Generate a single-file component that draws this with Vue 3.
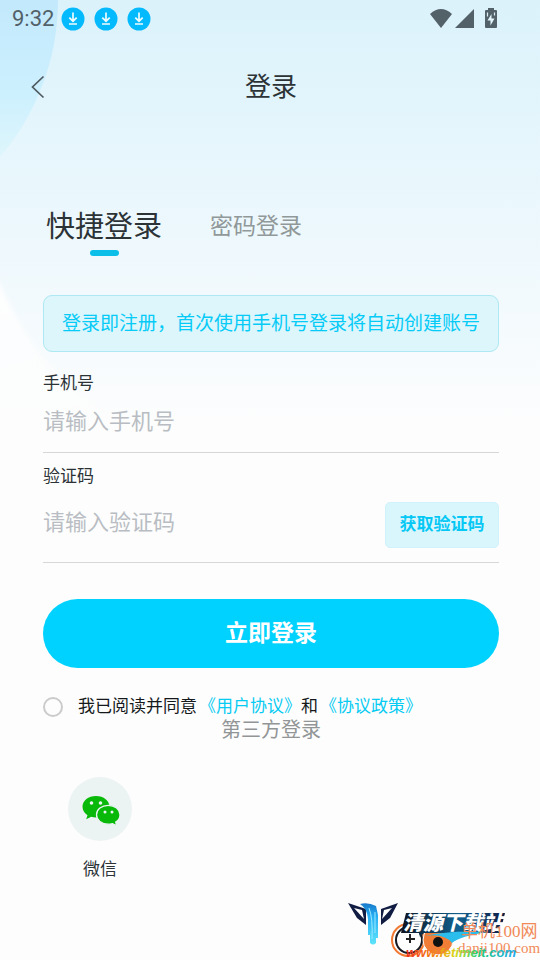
<script setup>
import { ref } from 'vue'

const phone = ref('')
const code = ref('')
const agreed = ref(false)
const mode = ref('quick')
const downloads = [1, 2, 3]
</script>

<template>
  <div class="page">
    <svg class="backdrop" viewBox="0 0 540 460" preserveAspectRatio="none" aria-hidden="true">
      <defs>
        <linearGradient id="disc" x1="0" y1="0" x2="0" y2="160" gradientUnits="userSpaceOnUse">
          <stop offset="0" stop-color="#c2e9fc" />
          <stop offset="0.6" stop-color="#cdf0fe" />
          <stop offset="1" stop-color="#dff6fc" />
        </linearGradient>
        <linearGradient id="fade" x1="0" y1="280" x2="60" y2="430" gradientUnits="userSpaceOnUse">
          <stop offset="0" stop-color="#fefefe" />
          <stop offset="1" stop-color="#fdfdfd" stop-opacity="0.4" />
        </linearGradient>
        <filter id="soft"><feGaussianBlur stdDeviation="2" /></filter>
      </defs>
      <circle cx="-183" cy="0" r="241" fill="url(#disc)" />
      <path d="M-12 264L0 284Q45 385 120 418L-12 450Z" fill="url(#fade)" filter="url(#soft)" />
    </svg>

    <header class="status">
      <span class="clock">9:32</span>
      <svg v-for="d in downloads" :key="d" class="download" viewBox="0 0 24 24" aria-hidden="true">
        <circle cx="12" cy="12" r="11.5" fill="#04baff" />
        <path d="M12 5.500v8.500M8.300 10.600L12 14.200l3.700-3.600M8 17h8" fill="none" stroke="#effbff" stroke-width="1.700" />
      </svg>
      <svg class="signals" viewBox="0 0 70 22" aria-hidden="true">
        <path d="M0 6Q11-4 22 6L11 20Z" fill="#536169" />
        <path d="M25 20L44 1V20Z" fill="#536169" />
        <path d="M58 0h6v2h2q1 0 1 1v16q0 1-1 1H56q-1 0-1-1V3q0-1 1-1h2Z" fill="#536169" />
        <path d="M61.500 6L57.500 12.500h3v5l4-7h-3Z" fill="#e5f7fd" />
        <path d="M57.500 4.500v4M64.500 4.500v3" stroke="#dceef5" stroke-width="1.200" />
      </svg>
    </header>

    <nav class="titlebar">
      <button class="back" type="button" aria-label="返回">
        <svg viewBox="0 0 14 24" aria-hidden="true">
          <path d="M12.500 1.500L1.500 12l11 10.500" fill="none" stroke="#4d595e" stroke-width="1.700" />
        </svg>
      </button>
      <h1>登录</h1>
    </nav>

    <main class="content">
      <div class="tabs">
        <button type="button" class="tab" :class="{ active: mode === 'quick' }" @click="mode = 'quick'">快捷登录</button>
        <button type="button" class="tab" :class="{ active: mode === 'password' }" @click="mode = 'password'">密码登录</button>
      </div>

      <p class="notice">登录即注册，首次使用手机号登录将自动创建账号</p>

      <form @submit.prevent>
        <div class="field">
          <label for="phone">手机号</label>
          <input id="phone" v-model="phone" type="tel" placeholder="请输入手机号" />
        </div>
        <div class="field">
          <label for="code">验证码</label>
          <div class="row">
            <input id="code" v-model="code" type="text" placeholder="请输入验证码" />
            <button type="button" class="send">获取验证码</button>
          </div>
        </div>
        <button type="submit" class="submit">立即登录</button>
        <div class="terms">
          <input id="agree" v-model="agreed" type="checkbox" />
          <p><label for="agree">我已阅读并同意</label><a href="#user">《用户协议》</a>和<a href="#policy">《协议政策》</a></p>
        </div>
      </form>

      <h2>第三方登录</h2>
      <button type="button" class="wechat">
        <svg viewBox="0 0 64 64" aria-hidden="true">
          <circle cx="32" cy="32" r="32" fill="#ecf3f3" />
          <path d="M28 19c-7.700 0-13.500 4.700-13.500 10.800 0 3.500 1.900 6.500 5 8.500l-1.300 4 5-2.500c1.500.4 3 .6 4.800.6 7.700 0 13.500-4.800 13.500-10.700S35.700 19 28 19Z" fill="#09b909" />
          <path d="M40.200 28.300c-6.600 0-11.700 4.200-11.700 9.400s5.100 9.500 11.700 9.500c1.500 0 3-.2 4.300-.6l4.200 2.200-1-3.700c2.700-1.700 4.300-4.400 4.300-7.400 0-5.200-5.200-9.400-11.800-9.400Z" fill="#09b909" stroke="#ecf3f3" stroke-width="1.300" />
          <g fill="#ecf3f3">
            <circle cx="23.500" cy="26" r="1.800" /><circle cx="32.500" cy="26" r="1.800" />
            <circle cx="37" cy="35" r="1.500" /><circle cx="44" cy="35" r="1.500" />
          </g>
        </svg>
        <span>微信</span>
      </button>
    </main>

    <svg class="mark" viewBox="0 0 200 70" role="img" aria-label="清源下载站">
      <defs>
        <linearGradient id="stream" x1="0" y1="0" x2="0" y2="1">
          <stop offset="0" stop-color="#1878c8" />
          <stop offset="0.300" stop-color="#25aef5" />
          <stop offset="1" stop-color="#5fe4fa" />
        </linearGradient>
        <linearGradient id="plate" x1="0" y1="0" x2="1" y2="0">
          <stop offset="0" stop-color="#10131f" />
          <stop offset="0.550" stop-color="#10608f" />
          <stop offset="1" stop-color="#101b42" />
        </linearGradient>
        <linearGradient id="rainbow" x1="66" y1="0" x2="176" y2="0" gradientUnits="userSpaceOnUse">
          <stop offset="0" stop-color="#f02a1c" />
          <stop offset="0.250" stop-color="#f48418" />
          <stop offset="0.450" stop-color="#d7d81c" />
          <stop offset="0.650" stop-color="#24cc70" />
          <stop offset="1" stop-color="#24a8f3" />
        </linearGradient>
      </defs>
      <path d="M8 13L26 19V35L17 28Z" fill="#111c42" />
      <path d="M14 18L22 20L24 29Z" fill="#fff" />
      <path d="M58 13L41 19V35L50 28Z" fill="#111c42" />
      <path d="M52 18L44 20L42 29Z" fill="#fff" />
      <path d="M20 14Q28 12 36 16L38 25V48H36V53Q33 56 30 53V45H28V29Q27 18 20 14Z" fill="url(#stream)" />
      <path d="M29 18Q33 28 32 49M35 22V43" fill="none" stroke="#9eeaff" stroke-width="1" />
      <circle cx="68" cy="50" r="16" fill="#fff" stroke="#f27933" stroke-width="2" />
      <circle cx="69" cy="50" r="13" fill="none" stroke="#171a22" stroke-width="2" />
      <circle cx="98" cy="50" r="15" fill="#f17d36" stroke="#fff" stroke-width="1" />
      <circle cx="98" cy="52" r="5" fill="#111" />
      <path d="M66 23H165L160 43H84L80 47L79 43H61Z" fill="url(#plate)" />
      <path d="M85 46Q110 40 148 42Q120 46 112 53Q104 43 85 46Z" fill="#2bbdec" />
      <path d="M70 44v9M66 49h9" stroke="#222" stroke-width="2" />
      <text class="brand" x="63" y="40">清源下载站</text>
      <text class="serif" x="121" y="47">单机100网</text>
      <text class="domain" x="118" y="63">danji100.com</text>
      <text class="site" x="66" y="67">www.fetimeit.com</text>
    </svg>
  </div>
</template>

<style>
body {
  margin: 0;
}
</style>

<style scoped>
.page {
  position: relative;
  box-sizing: border-box;
  min-height: 100vh;
  overflow: hidden;
  background: linear-gradient(#dbf2fb 0, #e6f6fc 150px, #f0f9fd 270px, #fdfdfd 430px);
  color: #2c3337;
  font-family: Roboto, "Noto Sans CJK SC", sans-serif;
}
button,
input {
  padding: 0;
  border: 0;
  background: none;
  color: inherit;
  font: inherit;
}
.backdrop {
  position: absolute;
  inset: 0;
  width: 100%;
  height: 460px;
}
.status {
  position: relative;
  display: flex;
  align-items: center;
  gap: 9px;
  height: 37px;
  padding: 0 40px 0 12px;
}
.clock {
  color: #536169;
  font-size: 22px;
  line-height: 36px;
  margin-right: -2px;
}
.download {
  width: 24px;
  height: 24px;
}
.signals {
  width: 70px;
  height: 22px;
  margin-left: auto;
}
.titlebar {
  position: relative;
  display: grid;
  grid-template-columns: 48px 1fr 46px;
  align-items: center;
  height: 100px;
}
.back {
  display: flex;
  justify-content: flex-end;
  padding-right: 3px;
}
.back svg {
  width: 14px;
  height: 24px;
}
h1 {
  margin: 0;
  font-size: 26px;
  font-weight: 400;
  line-height: 36px;
  text-align: center;
}
.content {
  position: relative;
  padding: 70px 41px 0 43px;
}
.tabs {
  display: flex;
  align-items: center;
  gap: 48px;
  height: 48px;
  padding-left: 3px;
}
.tab {
  display: flex;
  flex-direction: column;
  align-items: center;
  color: #919899;
  font-size: 23px;
  line-height: 42px;
}
.tab.active {
  color: #2c3337;
  font-size: 29px;
}
.tab::after {
  content: "";
  width: 29px;
  height: 6px;
  margin-top: 2px;
  border-radius: 3px;
}
.tab.active::after {
  background: #0bbfe9;
}
.notice {
  box-sizing: border-box;
  margin: 40px 0 0;
  padding: 14px 0 14px;
  border: 1px solid #aee8f3;
  border-radius: 9px;
  background: #dcf6fc;
  color: #06cbf7;
  font-size: 19px;
  line-height: 27px;
  text-align: center;
  white-space: nowrap;
}
.field {
  border-bottom: 1px solid #d5d7d8;
}
.field label {
  display: block;
  padding-top: 19px;
  font-size: 17px;
  line-height: 24px;
}
.field input {
  display: block;
  box-sizing: border-box;
  width: 100%;
  min-width: 0;
  height: 57px;
  padding-bottom: 4px;
  font-size: 22px;
  outline: 0;
}
.field + .field label {
  padding-top: 11px;
}
.row {
  display: flex;
  align-items: center;
  height: 74px;
  padding-bottom: 1px;
  box-sizing: border-box;
}
.field input::placeholder {
  color: #b9bdc3;
  opacity: 1;
}
.send {
  width: 114px;
  height: 46px;
  padding-bottom: 5px;
  border: 1px solid #d0f2fb;
  border-radius: 5px;
  background: #daf6fd;
  color: #06c8f5;
  font-size: 17px;
  font-weight: 700;
}
.row input {
  flex: 1;
}
.submit {
  display: block;
  width: 100%;
  height: 69px;
  margin-top: 36px;
  padding-bottom: 5px;
  border-radius: 35px;
  background: #00d2ff;
  color: #fff;
  font-size: 23px;
  font-weight: 700;
}
.terms {
  display: flex;
  align-items: center;
  gap: 15px;
  margin-top: 25px;
  color: #15191b;
  font-size: 17px;
  line-height: 26px;
}
.terms p {
  margin: 0;
}
.terms input {
  appearance: none;
  box-sizing: border-box;
  width: 20px;
  height: 20px;
  margin: 2px 0 0;
  border: 2px solid #cbcbcb;
  border-radius: 50%;
}
.terms input:checked {
  background: #00d2ff;
}
.terms a {
  padding-left: 2px;
  color: #06cbf2;
  text-decoration: none;
}
h2 {
  margin: 0;
  color: #919596;
  font-size: 20px;
  font-weight: 400;
  line-height: 22px;
  text-align: center;
}
.wechat {
  display: flex;
  flex-direction: column;
  align-items: center;
  gap: 16px;
  margin: 36px 0 0 25px;
  font-size: 17px;
  line-height: 24px;
}
.wechat svg {
  width: 64px;
  height: 64px;
}
.mark {
  position: absolute;
  right: 0;
  bottom: 0;
  width: 200px;
  height: 70px;
}
.brand {
  fill: #fff;
  font-size: 20px;
  font-weight: 900;
  font-style: italic;
}
.serif {
  fill: #f18a58;
  font-family: "Liberation Serif", "Noto Sans CJK SC", serif;
  font-size: 17px;
}
.domain {
  fill: #f18a58;
  font-family: "Liberation Serif", serif;
  font-size: 15px;
}
.site {
  fill: url(#rainbow);
  font-family: "Liberation Sans", sans-serif;
  font-size: 13px;
  font-weight: 700;
  font-style: italic;
}
</style>
